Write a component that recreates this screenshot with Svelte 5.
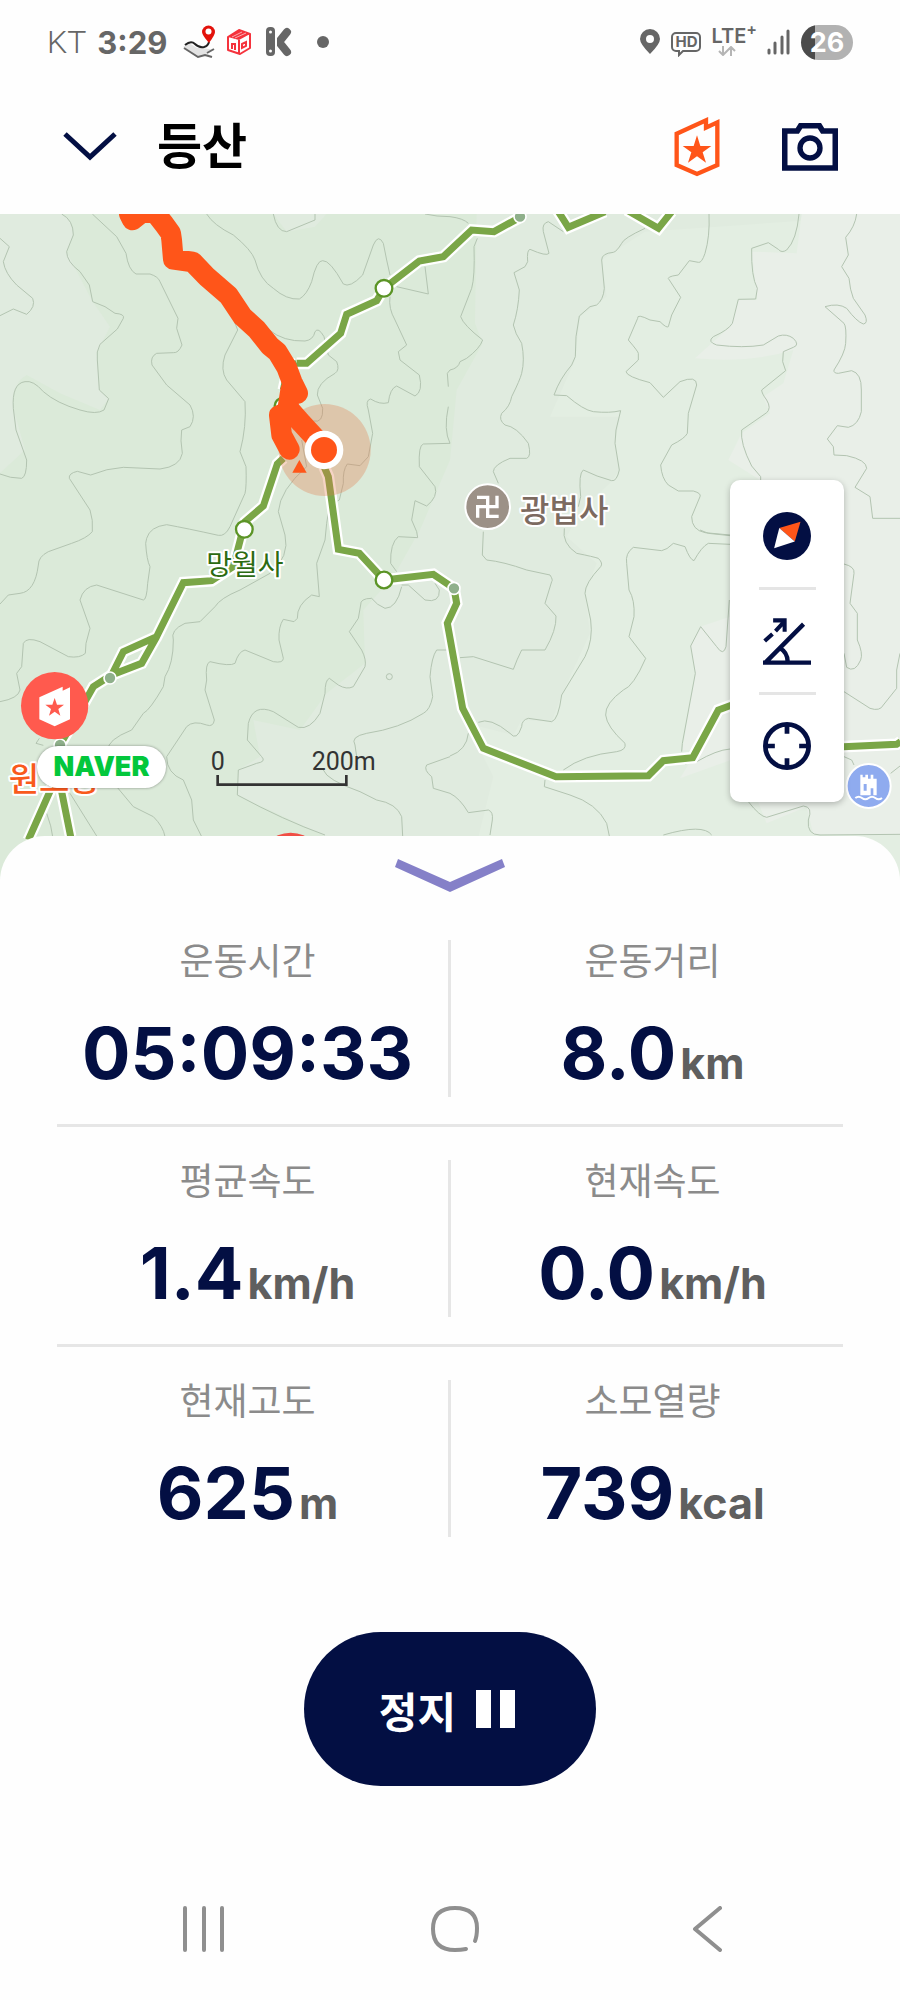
<script lang="ts">
  type Stat = { label: string; value: string; unit?: string };

  const rows: Stat[][] = [
    [
      { label: "운동시간", value: "05:09:33" },
      { label: "운동거리", value: "8.0", unit: "km" },
    ],
    [
      { label: "평균속도", value: "1.4", unit: "km/h" },
      { label: "현재속도", value: "0.0", unit: "km/h" },
    ],
    [
      { label: "현재고도", value: "625", unit: "m" },
      { label: "소모열량", value: "739", unit: "kcal" },
    ],
  ];

  // map units: 3 per css pixel
  const contours = [
    "M0 85L28 110L10 155Q15 190 50 225L98 265Q108 290 80 313L40 297L0 317",
    "M185 12Q220 30 220 75L200 125Q200 155 240 185L268 225L278 275L315 290L345 310Q375 312 370 325L352 357L300 403Q288 425 292 450L298 540L326 566L312 600Q290 615 240 600Q170 580 130 545Q100 510 75 515Q35 520 40 595L48 660L80 750Q80 800 65 805Q30 805 0 792",
    "M277 12L350 80L378 130Q385 180 408 192L450 192Q475 200 480 215L534 325L530 355L546 405Q535 430 520 428L470 430Q450 440 456 465L500 525L570 585Q590 620 570 650L545 660Q540 690 547 730Q540 770 480 777L370 772Q320 775 272 795L232 784Q205 790 208 805L270 900Q280 930 277 965Q260 985 215 1000L145 1025Q115 1040 115 1065Q105 1145 60 1150L25 1155L0 1182",
    "M620 12Q640 45 700 75Q755 120 765 150Q780 210 820 235Q860 270 898 267Q920 255 935 215Q950 150 968 152Q990 150 1030 222Q1050 235 1088 195L1120 105Q1135 70 1150 100L1160 150L1170 195",
    "M1190 230L1285 252L1275 170",
    "M1170 260Q1165 295 1185 330L1220 405L1195 425L1200 450L1258 495Q1270 545 1245 558L1190 528Q1170 535 1165 578Q1140 585 1112 567Q1095 570 1105 600L1118 670L1105 740L1080 767L1042 762Q1028 780 1030 820L1018 870Q985 880 980 940L975 990L950 1060L958 1160L935 1155Q890 1185 892 1225L882 1235L850 1228Q835 1250 837 1290L850 1345Q850 1360 820 1355L735 1320Q715 1325 705 1360Q690 1370 630 1355Q615 1360 620 1410L615 1440L643 1530Q640 1552 620 1545Q580 1530 560 1550L500 1640Q500 1690 550 1710L575 1770L580 1830L605 1880",
    "M690 300L713 360L675 435Q660 480 680 510L735 575Q740 650 720 725L738 770Q740 830 735 850L690 950Q675 980 655 976Q560 955 500 944Q450 950 440 985L437 1000Q440 1050 450 1070L443 1120Q440 1170 430 1170L290 1125Q250 1130 240 1170L270 1255L258 1300L256 1330Q240 1345 205 1340L120 1295Q80 1280 70 1300L65 1370L50 1390L60 1440Q55 1465 0 1475",
    "M808 360Q850 395 915 393Q940 390 945 365Q955 350 972 380L985 435L1010 455Q1020 480 1005 490Q950 520 952 555L968 595Q970 640 940 633",
    "M905 690L920 770Q840 840 835 905L855 975Q870 1040 810 1090L720 1140Q660 1165 645 1190L600 1235L555 1240Q510 1260 520 1290Q520 1360 495 1400L490 1430Q450 1500 430 1510L395 1560Q320 1590 325 1620",
    "M350 1730L400 1790L460 1820Q490 1850 495 1880",
    "M210 1750L290 1878M140 1810Q155 1850 158 1880M118 1585L108 1600L130 1606",
    "M1250 965L1253 983L1195 980Q1170 1000 1172 1060L1190 1085",
    "M1318 1140L1305 1120M1205 1125L1225 1125L1275 1170Q1320 1180 1318 1140M1205 1130Q1190 1195 1155 1195Q1130 1185 1115 1165Q1080 1165 1082 1185L1075 1225L1048 1265L1085 1320Q1100 1350 1095 1370L1060 1430Q1040 1440 1015 1425L988 1405Q975 1410 975 1450L960 1510Q930 1560 895 1552L820 1505Q760 1480 745 1540L742 1590L785 1640Q800 1655 770 1660L715 1680L712 1755Q850 1830 975 1875",
    "M1350 1320L1310 1320Q1295 1340 1290 1400L1298 1460Q1290 1500 1270 1510Q1200 1555 1100 1570Q1050 1580 1065 1605L1070 1640",
    "M970 1680Q980 1710 1080 1745L1130 1770Q1190 1780 1205 1820L1208 1878",
    "M1350 1640L1280 1665Q1270 1680 1295 1700L1300 1735L1350 1750",
    "M1350 480L1342 490L1345 530M1345 590Q1330 660 1350 700L1270 702Q1255 705 1258 770L1305 830Q1315 860 1280 888L1245 872L1235 930L1250 965",
    "M820 12Q830 65 860 65L945 30L945 12M1275 12Q1310 20 1350 20Q1390 25 1405 40",
  ];

  const eastContours = [
    "M82 85L72 110Q75 200 65 235L32 320Q40 345 98 390Q90 415 50 445L30 455Q25 475 0 480",
    "M340 65L295 35Q275 40 280 65L297 130Q290 140 240 118Q230 120 233 155L225 170L192 188L208 240Q205 300 190 345Q195 370 215 400Q225 450 215 490Q210 510 185 560Q180 590 155 610Q145 630 165 645Q200 650 235 700Q245 740 230 745L180 745Q130 765 130 785L145 820",
    "M100 965L97 1035L110 1050Q160 1055 230 1080L300 1095Q310 1110 305 1115L285 1180L318 1218Q320 1260 285 1320L215 1320Q200 1350 190 1378L70 1340L30 1343",
    "M585 55Q520 85 515 100Q500 125 490 127Q455 130 455 150L463 235Q460 270 440 285L420 290L388 318L378 380L376 440L365 465Q330 505 312 555L350 557Q400 600 430 605Q480 610 512 602L498 660L495 700L508 780Q500 815 485 812Q440 800 400 780Q385 790 392 860L385 890",
    "M343 955Q335 1000 380 1030Q430 1040 445 1045Q460 1060 452 1070Q405 1120 405 1150L422 1230Q430 1290 405 1340L335 1455Q325 1530 305 1535L235 1525Q215 1530 215 1550Q200 1595 180 1570Q120 1520 85 1537",
    "M777 12Q780 80 765 130Q755 160 745 157L718 152L685 195Q645 200 658 210L692 262L665 315L655 350Q650 355 630 335L600 330Q560 310 563 325L535 390Q565 425 565 430L565 450L528 485Q530 500 600 518L640 562L690 515Q740 495 740 525L715 610L712 670Q705 685 665 705L632 765Q635 805 655 825L685 843L730 843Q755 850 750 860L725 920Q725 960 765 968L840 975",
    "M1047 12Q1040 90 1010 120Q995 130 985 118L955 98L905 115Q903 200 922 235L917 267L865 268L847 340Q835 360 790 380Q770 395 800 405Q880 415 940 405L985 378Q1010 370 1030 385Q1050 405 1030 412L1000 425L998 455L1007 482L935 540Q935 550 950 570Q965 595 950 608L875 660Q870 700 905 768L932 800L932 815",
    "M1220 12Q1215 50 1187 82L1195 135L1175 170L1197 205Q1200 240 1210 265L1245 315Q1255 340 1240 342Q1220 335 1190 295Q1165 278 1125 290L1182 340Q1190 350 1187 400Q1185 430 1152 480Q1150 490 1165 490L1205 482Q1235 490 1234 540L1234 605Q1225 645 1195 652L1162 647L1132 687L1150 710L1152 735L1190 737Q1250 750 1250 775L1215 832L1260 860L1268 925L1350 925",
    "M840 1003L775 1000Q755 1010 732 1052Q720 1050 705 1010L670 1000Q650 1020 635 1022L550 1012Q525 1030 530 1060L537 1140Q555 1170 552 1220L537 1280L587 1345Q550 1430 520 1440Q465 1480 467 1515Q470 1550 525 1600Q530 1620 500 1625Q400 1635 340 1680",
    "M838 1170L828 1310Q820 1340 800 1310L752 1250L722 1308L736 1390L697 1600L695 1625",
    "M840 1617Q800 1620 740 1655L705 1662M750 960L775 970L840 977",
    "M285 1710L283 1730L360 1755Q440 1780 470 1840L478 1878",
    "M0 1750Q30 1765 55 1808L115 1800Q130 1805 127 1830L120 1875M55 1570Q50 1620 0 1638",
    "M640 1875Q760 1840 785 1875",
    "M1182 1062Q1215 1070 1212 1090L1200 1180L1222 1210L1222 1290Q1240 1330 1232 1350Q1215 1390 1190 1372L1182 1330",
    "M1182 1445L1260 1495Q1290 1505 1300 1485L1340 1435L1340 1380L1350 1330",
    "M895 1775Q930 1820 950 1822L1060 1788Q1090 1790 1075 1830Q1070 1875 1110 1875L1350 1873",
    "M1182 1640L1205 1650L1212 1665M1322 1690L1350 1668",
  ];

  const trails =
    "M890 460L920 460L1022 370L1040 313L1130 272L1152 235L1258 153L1330 140L1415 60L1482 65L1560 22" +
    "M1672 0L1705 52L1815 5M1880 0L1975 55L2015 5" +
    "M972 770L985 800L1015 1018L1078 1030L1152 1110L1300 1093L1362 1135L1370 1180L1342 1240L1388 1495L1450 1615L1668 1700L1945 1697L1990 1652L2078 1643L2155 1500L2250 1465L2360 1600L2530 1610L2690 1603L2702 1595" +
    "M850 745L832 762L790 888L735 935L700 1070L635 1112L550 1118L470 1280L370 1325L335 1395" +
    "M470 1280L425 1360L335 1395L280 1430L235 1510L180 1605L165 1710L85 1890M178 1710L212 1880" +
    "M850 540L865 470L890 460";

  const junctions = [[1152, 235], [733, 958], [1152, 1110]];
  const waypoints = [[1560, 20], [1362, 1135], [330, 1404], [180, 1605]];
</script>

<div class="screen">
  <div class="status">
    <div class="group">
      <span class="carrier">KT</span>
      <span class="clock">3:29</span>
      <svg width="34" height="34" viewBox="0 0 34 34">
        <path d="M1 22L7 18L15 23L21 23L32 25L25 28L30 32L22 30L16 33L9 28Z" fill="#e3e3e3" />
        <path d="M3 20Q9 15 13 19Q17 23 22 22Q26 21 27 17" fill="none" stroke="#222" stroke-width="2" />
        <path d="M2 23L16 32L23 30L30 32M25 28L32 24" fill="none" stroke="#666" stroke-width="2" />
        <path d="M27 18Q20 10 20 7A6 6 0 0 1 33 7Q33 10 27 18Z" fill="#e3120b" />
        <circle cx="26.500" cy="6.500" r="3" fill="#fff" />
      </svg>
      <svg width="24" height="26" viewBox="0 0 24 26">
        <path d="M1 8L12 1L23 5V19L13 25L1 21Z" fill="#fff" stroke="#f5333d" stroke-width="2" stroke-linejoin="round" />
        <path d="M1 8L12 1L23 5L12 11Z" fill="#f5333d" />
        <path d="M5 8L15 3M8 9L19 4" stroke="#fff" stroke-width="1" opacity="0.600" />
        <path d="M12 11V24M5 20V15H8V21M15 15L19 13V17L15 19Z" fill="none" stroke="#f5333d" stroke-width="2" />
      </svg>
      <svg class="k-icon" width="26" height="30" viewBox="0 0 26 30">
        <path d="M21 5L13 15L21 25" fill="none" stroke="#666" stroke-width="8" stroke-linecap="round" />
        <path d="M10 3V26" stroke="#fff" stroke-width="2" />
        <rect x="0" y="0" width="9" height="29" rx="4" fill="#666" />
        <circle cx="4.500" cy="5" r="1.500" fill="#fff" /><circle cx="4.500" cy="24" r="1.500" fill="#fff" />
      </svg>
      <span class="dot"></span>
    </div>
    <div class="group right">
      <svg width="22" height="26" viewBox="0 0 22 26">
        <path fill-rule="evenodd" d="M11 25Q1 15 1 10A10 10 0 0 1 21 10Q21 15 11 25ZM11 6A4 4 0 1 0 11 14A4 4 0 1 0 11 6Z" fill="#666" />
      </svg>
      <span class="hd">HD
        <svg width="8" height="7" viewBox="0 0 8 7"><path d="M1 0V5L6 0" fill="#fff" stroke="#666" stroke-width="2" /></svg>
      </span>
      <span class="lte">
        <span>LTE<sup>+</sup></span>
        <svg width="18" height="10" viewBox="0 0 18 10">
          <path d="M5 0V9M1 5L5 9L9 5M13 10V1M9 5L13 1L17 5" fill="none" stroke="#b5b5b5" stroke-width="2" />
        </svg>
      </span>
      <svg width="24" height="26" viewBox="0 0 24 26">
        <path d="M2 21V24M8 14V24M15 8V24M21 2V24" stroke="#666" stroke-width="3" stroke-linecap="round" />
      </svg>
      <span class="battery">26</span>
    </div>
  </div>

  <header>
    <button aria-label="접기">
      <svg width="54" height="30" viewBox="0 0 54 30">
        <path d="M2 2L27 25L52 2" fill="none" stroke="#030f43" stroke-width="5" />
      </svg>
    </button>
    <h1>등산</h1>
    <button aria-label="인증">
      <svg width="46" height="60" viewBox="0 0 138 180">
        <path d="M8 50L96 10V32L130 16V144L69 171L8 144Z" fill="none" stroke="#ff5519" stroke-width="13" />
        <path d="M69 55L79 87H112L86 106L96 137L69 118L42 137L52 106L26 87H59Z" fill="#ff5519" />
      </svg>
    </button>
    <button aria-label="카메라">
      <svg width="56" height="48" viewBox="0 0 168 144">
        <path d="M8 24H46L56 8H112L122 24H160V135H8Z" fill="none" stroke="#030f43" stroke-width="17" />
        <circle cx="84" cy="75" r="30" fill="none" stroke="#030f43" stroke-width="16" />
      </svg>
    </button>
  </header>

  <section class="map">
    <svg class="canvas" viewBox="0 12 2700 2010" preserveAspectRatio="xMidYMin slice">
      <rect y="12" width="2700" height="2010" fill="#dbead9" />
      <path d="M0 12H185Q220 30 220 75L200 125L275 270L330 350L290 430L298 540L326 566L300 600L180 550L80 495Q35 520 40 595L75 720L0 790Z" fill="#e0ebdf" />
      <path d="M820 12L860 65L945 50L980 12Z" fill="#e0ebdf" />
      <path d="M1430 12L1425 340L1448 400L1370 540L1350 750L1260 960L1180 1100L1090 1200L1095 1360L980 1450L900 1560L760 1530L780 1640L715 1680L712 1755L980 1880H2700V12Z" fill="#e0ebdf" />
      <path d="M1935 65L1865 110L1805 150L1820 260L1740 320L1725 450L1650 620L1860 620L1845 700L1858 780L1830 820L1742 900L1700 980L1790 1060L1755 1150L1770 1270L1685 1455L1655 1535L1565 1530L1540 1575L1400 1540L1480 1700L1400 2022H2700V12Z" fill="#e3eee2" />
      <path d="M2405 12L2390 130L2255 125L2272 270L2215 270L2190 350L2085 445Q2250 460 2380 420L2350 520L2290 560L2310 610L2225 670L2185 750L2280 810V1480L2155 1500L2078 1643L2040 1705L2220 1640L2300 1840L2420 1790L2440 1873L2700 1875V12Z" fill="#e9efe8" />
      <path d="M2190 1220L2100 1250L2072 1308L2086 1390L2047 1620H2200Z" fill="#e9efe8" />

      <g class="contour">
        {#each contours as d}<path {d} />{/each}
        <circle cx="1168" cy="1400" r="9" />
        <g transform="translate(1350 0)">
          {#each eastContours as d}<path {d} />{/each}
        </g>
      </g>

      <path class="casing" d={trails} />
      <path class="trail" d={trails} />
      {#each waypoints as [cx, cy]}
        <circle {cx} {cy} r="18" fill="#8fb08b" stroke="#fff" stroke-width="5" />
      {/each}
      <circle cx="848" cy="588" r="24" fill="#fff" stroke="#5b9426" stroke-width="7" />
      {#each junctions as [cx, cy]}
        <circle {cx} {cy} r="25" fill="#fff" stroke="#5b9426" stroke-width="7" />
      {/each}

      <circle cx="974" cy="720" r="138" fill="#e37a4c" opacity="0.320" />
      <path class="track" d="M388 12L397 30L425 8H465L492 42L512 70L515 90L520 148L578 156L620 200L685 256L728 320L770 358L810 408L832 426L860 472L876 515L893 550M872 540L862 605L838 616L845 675L868 718M870 600L905 640L965 705" />
      <path d="M898 750L920 788H877Z" fill="#ff5519" />
      <circle cx="972" cy="720" r="58" fill="#fff" />
      <circle cx="972" cy="720" r="39" fill="#ff5519" />

      <circle cx="1463" cy="890" r="67" fill="#9c9187" stroke="#fff" stroke-width="6" />
      <path d="M1431 862H1463V919H1496M1433 923V890H1491V857" fill="none" stroke="#fff" stroke-width="10" />
      <text class="place temple" x="1560" y="937">광법사</text>
      <text class="place stop" x="619" y="1095">망월사</text>
      <text class="place peak" x="26" y="1744">원도봉</text>

      <circle cx="164" cy="1487" r="101" fill="#ff5a4e" />
      <path d="M118 1462L188 1430V1442L210 1432V1528L164 1549L118 1528Z" fill="#fff" />
      <path d="M164 1464L171 1484H192L175 1497L181 1517L164 1505L147 1517L153 1497L136 1484H157Z" fill="#ff5a4e" />
      <circle cx="872" cy="1968" r="100" fill="#f04e45" />

      <circle cx="2606" cy="1728" r="66" fill="#8fabef" stroke="#fff" stroke-width="6" />
      <path fill-rule="evenodd" d="M2581 1694H2588V1702H2596V1694H2604V1706H2612V1694H2620V1706H2630V1694V1756H2620V1735H2612V1756H2581ZM2591 1722V1742H2600V1722Z" fill="#fff" />
      <path d="M2566 1764Q2576 1756 2586 1764T2606 1764T2626 1764T2646 1764" fill="none" stroke="#fff" stroke-width="6" />

      <g class="scale">
        <path d="M653 1695V1724H1039V1695" />
        <text x="653" y="1680">0</text>
        <text x="1031" y="1680">200m</text>
      </g>
    </svg>

    <a class="naver" href="#naver">NAVER</a>

    <div class="controls">
      <button aria-label="나침반">
        <svg width="48" height="48" viewBox="0 0 142 142">
          <circle cx="71" cy="71" r="71" fill="#030f43" />
          <path d="M111 29L48 47L94 87Z" fill="#ff5519" />
          <path d="M33 107L48 47L94 87Z" fill="#fff" />
        </svg>
      </button>
      <hr />
      <button aria-label="경사도">
        <svg width="48" height="48" viewBox="0 0 142 142">
          <path d="M0 135H142M7 135L120 21M50 92Q72 104 73 132" fill="none" stroke="#030f43" stroke-width="13" />
          <path d="M5 71L28 50M37 42L60 17M30 10H64V44" fill="none" stroke="#030f43" stroke-width="12" />
        </svg>
      </button>
      <hr />
      <button aria-label="현재 위치">
        <svg width="48" height="48" viewBox="0 0 142 142">
          <circle cx="71" cy="71" r="64" fill="none" stroke="#030f43" stroke-width="14" />
          <path d="M71 8V35M71 107V134M8 71H35M107 71H134" stroke="#030f43" stroke-width="14" />
        </svg>
      </button>
    </div>
  </section>

  <main>
    <button class="collapse" aria-label="기록 접기">
      <svg width="110" height="34" viewBox="0 0 110 34">
        <path d="M3 0L55 23L107 0L110 8L55 33L0 8Z" fill="#8580c8" />
      </svg>
    </button>

    {#each rows as row}
      <dl>
        {#each row as stat}
          <div class="stat">
            <dt>{stat.label}</dt>
            <dd>
              {stat.value}{#if stat.unit}<span>{stat.unit}</span>{/if}
            </dd>
          </div>
        {/each}
      </dl>
    {/each}

    <button class="stop-button">
      정지
      <svg width="39" height="38" viewBox="0 0 39 38"><path d="M0 0H15V38H0ZM24 0H39V38H24Z" fill="#fff" /></svg>
    </button>
  </main>

  <nav>
    <button aria-label="최근 앱">
      <svg width="44" height="46" viewBox="0 0 44 46"><path d="M4 2V44M23 2V44M41 2V44" /></svg>
    </button>
    <button aria-label="홈">
      <svg width="48" height="46" viewBox="0 0 48 46">
        <path d="M44 35Q46 30 46 22Q46 2 24 2Q2 2 2 23Q2 44 24 44Q30 44 35 43" />
      </svg>
    </button>
    <button aria-label="뒤로">
      <svg width="30" height="46" viewBox="0 0 30 46"><path d="M28 2L3 23L28 44" /></svg>
    </button>
  </nav>
</div>

<style>
  :global(body) {
    margin: 0;
    background: #fefefe;
  }
  .screen {
    min-height: 100vh;
    display: flex;
    flex-direction: column;
    background: #fefefe;
    font-family: Inter, "Noto Sans CJK KR", sans-serif;
  }
  button {
    display: flex;
    align-items: center;
    justify-content: center;
    padding: 0;
    border: none;
    background: none;
    font: inherit;
    cursor: pointer;
  }
  svg {
    display: block;
    flex: none;
  }

  .status {
    display: flex;
    justify-content: space-between;
    height: 84px;
    padding: 0 47px;
    box-sizing: border-box;
    color: #666;
  }
  .group {
    display: flex;
    align-items: center;
    gap: 11px;
  }
  .carrier {
    font-family: Roboto, sans-serif;
    font-size: 32px;
    font-weight: 300;
  }
  .clock {
    margin-right: 4px;
    font-size: 31px;
    font-weight: 700;
  }
  .k-icon {
    margin-left: 4px;
  }
  .dot {
    width: 12px;
    height: 12px;
    margin-left: 14px;
    border-radius: 50%;
    background: #666;
  }
  .right {
    gap: 10px;
  }
  .hd {
    position: relative;
    padding: 0 2px;
    border: 2px solid #666;
    border-radius: 5px;
    font-size: 15px;
    font-weight: 700;
    line-height: 16px;
  }
  .hd svg {
    position: absolute;
    left: 5px;
    top: 16px;
  }
  .lte {
    display: flex;
    flex-direction: column;
    gap: 2px;
    font-size: 20px;
    font-weight: 600;
    line-height: 16px;
  }
  .lte svg {
    margin-left: 7px;
  }
  sup {
    font-size: 16px;
    line-height: 0;
  }
  .battery {
    width: 52px;
    border-radius: 18px;
    background: linear-gradient(90deg, #4b4b4b 26%, #b2b2b2 26%);
    color: #fff;
    font-size: 27px;
    font-weight: 700;
    line-height: 35px;
    text-align: center;
  }

  header {
    display: flex;
    align-items: center;
    gap: 62px;
    height: 130px;
    padding: 0 62px 4px 63px;
    box-sizing: border-box;
  }
  h1 {
    flex: 1;
    margin: 0 0 0 -22px;
    color: #000;
    font-size: 49px;
    font-weight: 700;
    line-height: 60px;
  }

  .map {
    position: relative;
    height: 670px;
    overflow: hidden;
  }
  .canvas {
    width: 100%;
    height: 100%;
  }
  .contour {
    fill: none;
    stroke: #b3c4b1;
    stroke-width: 3;
  }
  .casing,
  .trail,
  .track {
    fill: none;
    stroke: #fff;
    stroke-width: 35;
  }
  .trail {
    stroke: #7aa647;
    stroke-width: 21;
  }
  .track {
    stroke: #ff5519;
    stroke-width: 62;
    stroke-linecap: round;
    stroke-linejoin: round;
  }
  .place {
    font-weight: 500;
    paint-order: stroke;
    stroke: #fff;
    stroke-width: 12;
    stroke-linejoin: round;
  }
  .temple {
    fill: #7c6a60;
    font-size: 96px;
  }
  .stop {
    fill: #2c6b12;
    font-size: 84px;
    font-weight: 400;
  }
  .peak {
    fill: #f95a1c;
    font-size: 99px;
  }
  .scale path {
    fill: none;
    stroke: #333;
    stroke-width: 8;
  }
  .scale text {
    fill: #333;
    font-family: Roboto, sans-serif;
    font-size: 75px;
    text-anchor: middle;
  }
  .naver {
    position: absolute;
    left: 37px;
    top: 532px;
    width: 129px;
    border-radius: 21px;
    background: #fff;
    box-shadow: 0 0 3px rgba(0, 0, 0, 0.4);
    color: #03c73c;
    font-size: 27px;
    font-weight: 900;
    line-height: 42px;
    text-align: center;
    text-decoration: none;
  }
  .controls {
    position: absolute;
    right: 56px;
    top: 266px;
    width: 114px;
    padding: 5px 0;
    border-radius: 10px;
    background: #fff;
    box-shadow: 0 2px 6px rgba(0, 0, 0, 0.25);
  }
  .controls button {
    width: 100%;
    height: 102px;
  }
  hr {
    width: 57px;
    height: 3px;
    margin: 0 auto;
    border: none;
    background: #e5e5e5;
  }

  main {
    position: relative;
    margin-top: -48px;
    padding: 0 45px;
    border-radius: 45px 45px 0 0;
    background: #fefefe;
  }
  .collapse {
    width: 100%;
    height: 71px;
    padding-top: 8px;
  }
  dl {
    position: relative;
    display: grid;
    grid-template-columns: 1fr 1fr;
    margin: 0;
    padding: 33px 0 30px;
  }
  dl:not(:last-of-type)::after {
    content: "";
    position: absolute;
    left: 12px;
    right: 12px;
    bottom: 0;
    height: 3px;
    background: #e6e6e6;
  }
  .stat {
    height: 157px;
    text-align: center;
  }
  .stat + .stat {
    box-shadow: -2px 0 #e6e6e6, inset 1px 0 #e6e6e6;
  }
  dt {
    color: #8b8b8b;
    font-size: 37px;
    line-height: 44px;
  }
  dd {
    margin: 24px 0 0;
    color: #030f43;
    font-size: 72px;
    font-weight: 700;
    line-height: 90px;
  }
  dd span {
    margin-left: 4px;
    color: #5f5f5f;
    font-size: 43px;
    font-weight: 700;
  }
  .stop-button {
    gap: 20px;
    width: 292px;
    height: 154px;
    margin: 65px auto 0;
    padding-right: 6px;
    border-radius: 77px;
    background: #030f43;
    color: #fff;
    font-size: 42px;
    font-weight: 700;
  }

  nav {
    display: grid;
    grid-template-columns: repeat(3, 1fr);
    margin-top: auto;
    padding: 0 67px 0 77px;
  }
  nav button {
    height: 142px;
  }
  nav path {
    fill: none;
    stroke: #8f8f8f;
    stroke-width: 4;
    stroke-linecap: round;
    stroke-linejoin: round;
  }
</style>
